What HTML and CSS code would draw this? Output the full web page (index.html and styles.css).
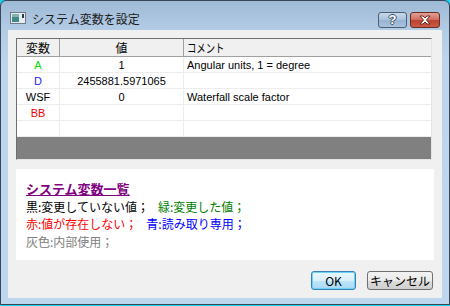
FILE: index.html
```html
<!DOCTYPE html>
<html lang="ja">
<head>
    <meta charset="UTF-8">
    <title>システム変数を設定</title>
    <link rel="stylesheet" href="styles.css">
</head>
<body>
<div class="window">
    <div class="titlebar">
        <svg class="app-icon" width="16" height="12" viewBox="0 0 16 12">
            <rect x="0.5" y="0.5" width="15" height="11" fill="#e8ecef" stroke="#6d7b88"/>
            <rect x="2" y="2" width="7" height="8" fill="#3f8a86"/>
            <rect x="2" y="2" width="7" height="3" fill="#7fb5b0"/>
            <rect x="12" y="2" width="2" height="4" fill="#2d3b46"/>
        </svg>
        <span class="title">システム変数を設定</span>
        <div class="caption-buttons">
            <div class="cap help">?</div>
            <div class="cap close">
                <svg width="14" height="10" viewBox="0 0 14 10">
                    <path d="M2 1 L5 1 L7 3 L9 1 L12 1 L8.5 5 L12 9 L9 9 L7 7 L5 9 L2 9 L5.5 5 Z" fill="#fff" stroke="#6b2a22" stroke-width="1" stroke-linejoin="round"/>
                </svg>
            </div>
        </div>
    </div>

    <div class="client">
        <div class="grid">
            <div class="row head">
                <div class="cell c1">変数</div>
                <div class="cell c2">値</div>
                <div class="cell c3"><span class="narrow">コメント</span></div>
            </div>
            <div class="row">
                <div class="cell c1 green">A</div>
                <div class="cell c2">1</div>
                <div class="cell c3">Angular units, 1 = degree</div>
            </div>
            <div class="row">
                <div class="cell c1 blue">D</div>
                <div class="cell c2">2455881.5971065</div>
                <div class="cell c3"></div>
            </div>
            <div class="row">
                <div class="cell c1">WSF</div>
                <div class="cell c2">0</div>
                <div class="cell c3">Waterfall scale factor</div>
            </div>
            <div class="row">
                <div class="cell c1 red">BB</div>
                <div class="cell c2"></div>
                <div class="cell c3"></div>
            </div>
            <div class="row">
                <div class="cell c1"></div>
                <div class="cell c2"></div>
                <div class="cell c3"></div>
            </div>
            <div class="grid-fill"></div>
        </div>

        <div class="notes">
            <div class="notes-title">システム変数一覧</div>
            <div>黒:変更していない値；<span class="n-green gap">緑:変更した値；</span></div>
            <div><span class="n-red">赤:値が存在しない；</span><span class="n-blue gap">青:読み取り専用；</span></div>
            <div class="n-gray">灰色:内部使用；</div>
        </div>

        <div class="actions">
            <button class="btn default">OK</button>
            <button class="btn">キャンセル</button>
        </div>
    </div>
</div>
</body>
</html>
```

FILE: styles.css
```css
html {
    background: #12d4ee;
}
body {
    margin: 0;
    font-family: "Liberation Sans", "Noto Sans CJK JP", sans-serif;
    font-size: 12px;
    color: #000;
}
.window {
    width: 450px;
    height: 305px;
    box-sizing: border-box;
    border: 1px solid #3a4656;
    border-radius: 6px 6px 0 0;
    background: linear-gradient(#9fbad6 0, #b3cce6 29px, #bcd4ec 60px, #bed6ee 100%);
    display: flex;
    flex-direction: column;
}
.titlebar {
    height: 29px;
    display: flex;
    align-items: center;
    padding: 0 9px 0 9px;
}
.app-icon {
    margin-top: 5px;
}
.title {
    margin-left: 6px;
    margin-top: 6px;
    font-family: "Noto Sans CJK JP", sans-serif;
    font-size: 12px;
    color: #1a1a1a;
}
.caption-buttons {
    margin-left: auto;
    display: flex;
    gap: 3px;
    margin-top: 8px;
}
.cap {
    height: 14px;
    border: 1px solid #4d5d73;
    border-radius: 3px;
    display: flex;
    align-items: center;
    justify-content: center;
}
.help {
    width: 27px;
    background: linear-gradient(#c7d8ea, #a9c1db 50%, #98b3d0 51%, #a8c3de);
    color: #fff;
    font-family: "Liberation Sans", sans-serif;
    font-weight: bold;
    font-size: 13px;
    text-shadow: 1px 0 #3f5068, -1px 0 #3f5068, 0 1px #3f5068, 0 -1px #3f5068;
}
.close {
    width: 28px;
    border-color: #6a2b23;
    background: linear-gradient(#e3a196, #cf6a5b 50%, #be4232 51%, #c95a43);
}
.client {
    flex: 1;
    margin: 0 7px 6px 7px;
    background: #f0f0f0;
    padding: 8px 8px 0 8px;
    display: flex;
    flex-direction: column;
}
.grid {
    width: 416px;
    height: 122px;
    box-sizing: border-box;
    border: 1px solid;
    border-color: #6e6e6e #e4e4e4 #e4e4e4 #6e6e6e;
    background: #fff;
    display: flex;
    flex-direction: column;
}
.row {
    display: flex;
    height: 16px;
    line-height: 16px;
    font-size: 11px;
}
.row.head {
    height: 18px;
    line-height: 17px;
    background: #f0f0f0;
    font-family: "Noto Sans CJK JP", sans-serif;
    font-size: 12px;
}
.cell {
    box-sizing: border-box;
    border-right: 1px solid #ececec;
    border-bottom: 1px solid #ececec;
    white-space: nowrap;
    overflow: hidden;
}
.head .cell {
    border-right-color: #a0a0a0;
    border-bottom-color: #a0a0a0;
}
.c1 {
    width: 43px;
    text-align: center;
}
.c2 {
    width: 124px;
    text-align: center;
}
.c3 {
    flex: 1;
    padding-left: 3px;
    border-right: none;
}
.narrow {
    display: inline-block;
    transform: scaleX(0.78);
    transform-origin: left center;
}
.green { color: #00d800; }
.blue { color: #1f1fe8; }
.red { color: #f00000; }
.grid-fill {
    flex: 1;
    background: #808080;
}
.notes {
    margin-top: 9px;
    width: 418px;
    height: 91px;
    box-sizing: border-box;
    background: #fff;
    padding: 11px 10px 0 10px;
    font-family: "Noto Sans CJK JP", sans-serif;
    font-size: 12px;
    line-height: 17.5px;
}
.notes-title {
    color: #800080;
    font-weight: bold;
    font-size: 13px;
    text-decoration: underline;
}
.gap {
    margin-left: 9px;
}
.n-green { color: #008000; }
.n-red { color: #ff0000; }
.n-blue { color: #0000ff; }
.n-gray { color: #808080; }
.actions {
    margin-top: 11px;
    width: 417px;
    display: flex;
    justify-content: flex-end;
    gap: 11px;
}
.btn {
    height: 19px;
    padding: 0 2px;
    box-sizing: border-box;
    border: 1px solid #707070;
    border-radius: 3px;
    background: linear-gradient(#f2f2f2, #ebebeb 50%, #dddddd 51%, #cfcfcf);
    font-family: "Noto Sans CJK JP", sans-serif;
    font-size: 12px;
    line-height: 16px;
    color: #000;
}
.btn.default {
    width: 45px;
    border-color: #3c7fb1;
    background: linear-gradient(#eaf6fd, #d9f0fc 50%, #bee6fd 51%, #a7d9f5);
    box-shadow: inset 0 0 0 1px #6ad3f7;
}
```
